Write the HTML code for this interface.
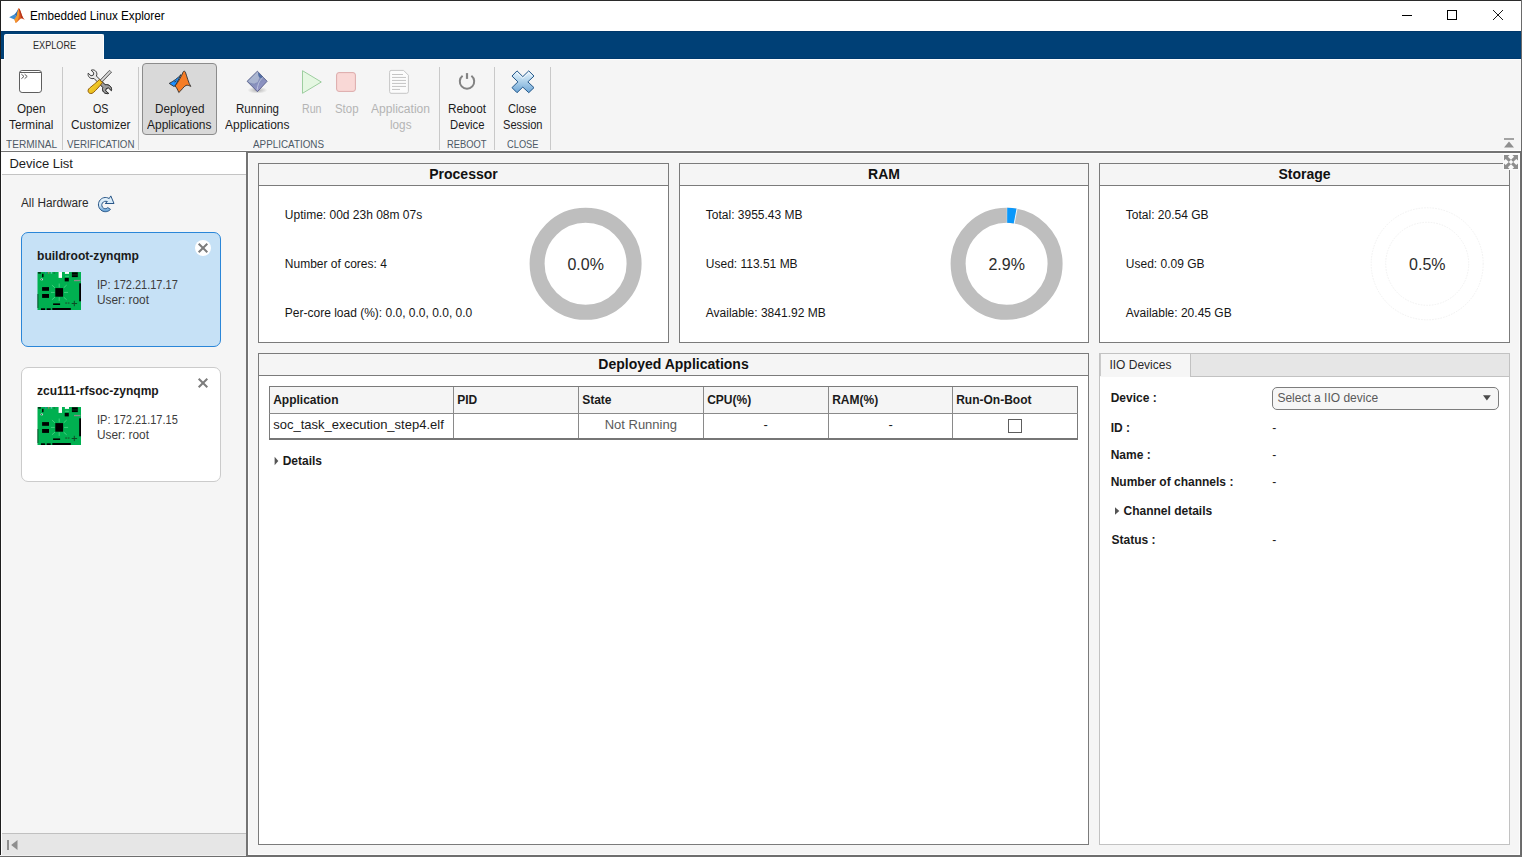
<!DOCTYPE html>
<html><head><meta charset="utf-8"><title>Embedded Linux Explorer</title>
<style>
html,body{margin:0;padding:0;}
body{width:1522px;height:857px;overflow:hidden;position:relative;background:#f5f5f5;font-family:"Liberation Sans", sans-serif;}
.b{position:absolute;box-sizing:border-box;}
.t{position:absolute;white-space:pre;line-height:1;transform-origin:0 0;font-family:"Liberation Sans", sans-serif;}
svg{overflow:visible;}
</style></head><body>
<div class="b" style="left:0px;top:0px;width:1522px;height:857px;background:#f5f5f5;"></div>
<div class="b" style="left:0px;top:0px;width:1522px;height:31px;background:#ffffff;"></div>
<div class="b" style="left:0px;top:31px;width:1522px;height:28px;background:#004076;"></div>
<div class="b" style="left:0px;top:31px;width:1522px;height:1px;background:#00376a;"></div>
<div class="b" style="left:0px;top:58px;width:1522px;height:1px;background:#003a6e;"></div>
<div class="b" style="left:0px;top:59px;width:1522px;height:1px;background:#fdfdfd;"></div>
<div class="b" style="left:4px;top:34px;width:100px;height:26px;background:#f5f5f5;border-radius:2px 2px 0 0;border:1px solid #fff;border-bottom:none;"></div>
<span class="t" style="left:30.40px;top:10.09px;font-size:12px;color:#000;transform:scaleX(0.9747);">Embedded Linux Explorer</span>
<span class="t" style="left:32.85px;top:39.52px;font-size:11.5px;color:#2a2a2a;transform:scaleX(0.7933);">EXPLORE</span>
<svg class="b" style="left:8px;top:6.7px" width="18" height="17" viewBox="0 0 18 17">
<path d="M1.2 10.2 L6.2 7.6 L8.6 9.4 L6.4 12.6 Z" fill="#3f8fd2"/>
<path d="M6.2 7.6 C8.2 6 9.3 3.6 10.4 1.6 L9.2 9.2 L8.6 9.4 Z" fill="#2f6fb0"/>
<path d="M10.4 1.6 C11.4 1 12.3 3.2 13 5.4 C14 8.6 15 11.4 16.6 12.6 C15.2 12.2 14.2 10.8 13 11.6 C11.2 12.8 9.6 15.2 7.8 16 L6.4 12.6 L8.6 9.4 Z" fill="#e2601f"/>
<path d="M10.4 1.6 C11 3 11.4 8 10.6 11 C9.8 13.2 8.8 15 7.8 16 L6.4 12.6 L8.6 9.4 Z" fill="#f29a2e"/>
<path d="M10.4 1.6 C11.4 1 12.3 3.2 13 5.4 C14 8.6 15 11.4 16.6 12.6 C15.2 12.2 14.2 10.8 13 11.6 C12.6 8 11.6 4 10.4 1.6 Z" fill="#b5321c"/>
</svg>
<svg class="b" style="left:1399px;top:8px" width="110" height="16" viewBox="0 0 110 16">
<path d="M3 7.5 H13" stroke="#000" stroke-width="1"/>
<rect x="48.5" y="2.5" width="9" height="9" fill="none" stroke="#000" stroke-width="1"/>
<path d="M94 2 L104 12 M104 2 L94 12" stroke="#000" stroke-width="0.9"/>
</svg>
<div class="b" style="left:62px;top:67px;width:1px;height:84px;background:#c9c9c9;"></div>
<div class="b" style="left:138px;top:67px;width:1px;height:84px;background:#c9c9c9;"></div>
<div class="b" style="left:439px;top:67px;width:1px;height:84px;background:#c9c9c9;"></div>
<div class="b" style="left:494px;top:67px;width:1px;height:84px;background:#c9c9c9;"></div>
<div class="b" style="left:550px;top:67px;width:1px;height:84px;background:#c9c9c9;"></div>
<div class="b" style="left:142px;top:63px;width:75px;height:72px;background:#d9d9d9;border:1px solid #8c8c8c;border-radius:4px;"></div>
<span class="t" style="left:16.95px;top:103.09px;font-size:12px;color:#1c1c1c;transform:scaleX(0.9707);">Open</span>
<span class="t" style="left:8.95px;top:119.09px;font-size:12px;color:#1c1c1c;transform:scaleX(0.9811);">Terminal</span>
<span class="t" style="left:92.65px;top:103.09px;font-size:12px;color:#1c1c1c;transform:scaleX(0.8937);">OS</span>
<span class="t" style="left:70.65px;top:119.09px;font-size:12px;color:#1c1c1c;transform:scaleX(0.9804);">Customizer</span>
<span class="t" style="left:154.95px;top:103.09px;font-size:12px;color:#1c1c1c;transform:scaleX(0.9763);">Deployed</span>
<span class="t" style="left:147.45px;top:119.09px;font-size:12px;color:#1c1c1c;transform:scaleX(0.9966);">Applications</span>
<span class="t" style="left:235.60px;top:103.09px;font-size:12px;color:#1c1c1c;transform:scaleX(0.9619);">Running</span>
<span class="t" style="left:224.85px;top:119.09px;font-size:12px;color:#1c1c1c;transform:scaleX(0.9966);">Applications</span>
<span class="t" style="left:302.05px;top:103.09px;font-size:12px;color:#b4b4b4;transform:scaleX(0.8857);">Run</span>
<span class="t" style="left:334.75px;top:103.09px;font-size:12px;color:#b4b4b4;transform:scaleX(0.9519);">Stop</span>
<span class="t" style="left:371.00px;top:103.09px;font-size:12px;color:#b4b4b4;transform:scaleX(1.0048);">Application</span>
<span class="t" style="left:389.75px;top:119.09px;font-size:12px;color:#b4b4b4;transform:scaleX(0.9766);">logs</span>
<span class="t" style="left:448.00px;top:103.09px;font-size:12px;color:#1c1c1c;transform:scaleX(0.9818);">Reboot</span>
<span class="t" style="left:449.75px;top:119.09px;font-size:12px;color:#1c1c1c;transform:scaleX(0.9404);">Device</span>
<span class="t" style="left:508.35px;top:103.09px;font-size:12px;color:#1c1c1c;transform:scaleX(0.9287);">Close</span>
<span class="t" style="left:502.85px;top:119.09px;font-size:12px;color:#1c1c1c;transform:scaleX(0.925);">Session</span>
<span class="t" style="left:5.80px;top:138.94px;font-size:11px;color:#4d5965;transform:scaleX(0.9169);">TERMINAL</span>
<span class="t" style="left:66.55px;top:138.94px;font-size:11px;color:#4d5965;transform:scaleX(0.8858);">VERIFICATION</span>
<span class="t" style="left:253.30px;top:138.94px;font-size:11px;color:#4d5965;transform:scaleX(0.8957);">APPLICATIONS</span>
<span class="t" style="left:446.95px;top:138.94px;font-size:11px;color:#4d5965;transform:scaleX(0.8503);">REBOOT</span>
<span class="t" style="left:506.85px;top:138.94px;font-size:11px;color:#4d5965;transform:scaleX(0.8446);">CLOSE</span>
<div class="b" style="left:0px;top:150px;width:1522px;height:1px;background:#fdfdfd;"></div>
<div class="b" style="left:0px;top:151px;width:1522px;height:1px;background:#747474;"></div>
<div class="b" style="left:246px;top:152px;width:1276px;height:1px;background:#747474;"></div>
<div class="b" style="left:1px;top:152px;width:245px;height:22px;background:#ffffff;"></div>
<div class="b" style="left:1px;top:174px;width:245px;height:1px;background:#c4c4c4;"></div>
<div class="b" style="left:246px;top:152px;width:2px;height:705px;background:#747474;"></div>
<div class="b" style="left:248px;top:153px;width:1272px;height:702px;border:1px solid #fcfcfc;"></div>
<span class="t" style="left:9.40px;top:157.25px;font-size:13px;color:#1c1c1c;">Device List</span>
<span class="t" style="left:21.20px;top:197.09px;font-size:12px;color:#2a2a2a;transform:scaleX(0.9825);">All Hardware</span>
<div class="b" style="left:1px;top:833px;width:245px;height:1px;background:#c0c0c0;"></div>
<div class="b" style="left:1px;top:834px;width:245px;height:21px;background:#e6e6e6;"></div>
<svg class="b" style="left:6px;top:839px" width="14" height="12" viewBox="0 0 14 12"><rect x="1" y="1" width="2" height="10" fill="#8e8e8e"/><path d="M11.5 1 L11.5 11 L5.2 6 Z" fill="#8e8e8e"/></svg>
<div class="b" style="left:0px;top:0px;width:1px;height:857px;background:#1e1e1e;"></div>
<div class="b" style="left:1px;top:152px;width:1px;height:703px;background:#fdfdfd;"></div>
<div class="b" style="left:0px;top:0px;width:1522px;height:1px;background:#2b2b2b;"></div>
<div class="b" style="left:1521px;top:0px;width:1px;height:857px;background:#6a6a6a;"></div>
<div class="b" style="left:1520px;top:151px;width:1px;height:706px;background:#6e6e6e;"></div>
<div class="b" style="left:0px;top:855px;width:246px;height:1px;background:#f0f0f0;"></div>
<div class="b" style="left:0px;top:856px;width:1522px;height:1px;background:#6e6e6e;"></div>
<div class="b" style="left:246px;top:855px;width:1276px;height:1px;background:#6e6e6e;"></div>
<svg class="b" style="left:18px;top:69px" width="26" height="26" viewBox="0 0 26 26">
<rect x="1.5" y="1.5" width="22" height="22" rx="2.6" ry="2.6" fill="#ffffff" stroke="#5e5e5e" stroke-width="1"/>
<path d="M1.8 3.5 H23.2" stroke="#5e5e5e" stroke-width="1"/>
<path d="M3.4 5.2 L6 7.45 L3.4 9.7 M6.6 5.2 L9.2 7.45 L6.6 9.7" fill="none" stroke="#5a5a5a" stroke-width="1"/>
</svg>
<svg class="b" style="left:83px;top:66px" width="34" height="32" viewBox="0 0 34 32">
<defs>
<linearGradient id="hnd" x1="0" y1="0" x2="1" y2="1"><stop offset="0" stop-color="#fbe23a"/><stop offset="1" stop-color="#e0a70c"/></linearGradient>
</defs>
<!-- wrench -->
<path d="M8.2 4.2 C10.6 3.2 13.2 4.6 13.8 7.2 C14 8.4 13.8 9.2 13.4 10 L22.2 18.8 C23.8 18.4 26 18.8 27.4 20.4 C28.6 21.8 28.8 23.4 28.4 24.6 L25.4 21.8 L23.2 22.6 L22.6 24.8 L25.6 27.4 C24 28 21.8 27.4 20.6 26 C19.4 24.6 19.2 22.8 19.8 21.4 L11 12.4 C9.8 12.8 8 12.8 6.6 11.6 C5.2 10.4 4.8 8.6 5.2 7.2 L8 9.8 L10.2 9.2 L10.8 7 Z" fill="#e9e9e9" stroke="#2b2b2b" stroke-width="0.9" stroke-linejoin="round"/>
<path d="M19.8 21.4 C19.2 22.8 19.4 24.6 20.6 26 C21.8 27.4 24 28 25.6 27.4 L22.6 24.8 L23.2 22.6 L25.4 21.8 L28.4 24.6 C28.8 23.4 28.6 21.8 27.4 20.4 C26 18.8 23.8 18.4 22.2 18.8 L18 14.6 L15.6 17 Z" fill="#9c9c9c" stroke="#2b2b2b" stroke-width="0.9" stroke-linejoin="round"/>
<!-- screwdriver shaft -->
<path d="M17.2 14 L26.4 4.4 L28.6 6.2 L19.2 16 Z" fill="#b9b9b9" stroke="#4a4a4a" stroke-width="0.8" stroke-linejoin="round"/>
<path d="M18.4 14.6 L27.2 5.4" stroke="#efefef" stroke-width="0.8"/>
<!-- handle -->
<path d="M16.4 13.6 L19.4 16.6 C16.6 20.4 13.2 24 10.4 26.6 C8.8 28 6.6 27.8 5.6 26.4 C4.6 25 5 23.2 6.6 22 C10 19.4 13.4 16.4 16.4 13.6 Z" fill="url(#hnd)" stroke="#8a5200" stroke-width="0.9" stroke-linejoin="round"/>
</svg>
<svg class="b" style="left:163px;top:66px" width="34" height="32" viewBox="0 0 34 32">
<path d="M6.2 17.4 C10 15.6 14.8 12.2 18 8.6 L12.4 19.8 L10.8 20.4 Z" fill="#1e90ff" stroke="#303030" stroke-width="0.9" stroke-linejoin="round"/>
<path d="M12.1 19.9 C15.6 15.6 18.8 9.6 20 6.2 C20.6 4.8 21.8 4.8 22.4 6.2 C24 10.6 25.6 17.4 27.8 20.4 C26 19.6 24.6 18.8 23 19.4 C20.4 20.6 18.6 24.4 15.8 26.5 C14.8 24 13.6 21.6 12.1 19.9 Z" fill="#f57d26" stroke="#303030" stroke-width="0.9" stroke-linejoin="round"/>
<path d="M11.4 16 L13.4 14.8" stroke="#303030" stroke-width="0.9"/>
</svg>
<svg class="b" style="left:240px;top:66px" width="34" height="32" viewBox="0 0 34 32">
<defs>
<linearGradient id="dia" x1="0" y1="0" x2="0.6" y2="1"><stop offset="0" stop-color="#a3afcb"/><stop offset="0.5" stop-color="#808cb6"/><stop offset="0.85" stop-color="#8f93c4"/><stop offset="1" stop-color="#a9a2d6"/></linearGradient>
<radialGradient id="shd" cx="0.5" cy="0.5" r="0.5"><stop offset="0" stop-color="#000" stop-opacity="0.28"/><stop offset="1" stop-color="#000" stop-opacity="0"/></radialGradient>
</defs>
<ellipse cx="17.4" cy="24.2" rx="10" ry="3.4" fill="url(#shd)"/>
<path d="M17.4 5.2 L27.1 15.3 L17.4 25.7 L7.1 15.3 Z" fill="url(#dia)" stroke="#47507e" stroke-width="0.8" stroke-linejoin="round"/>
<path d="M17.4 5.8 L18.6 7.2 C18.2 9 18.6 10.8 19.4 12 C18.6 13.4 18.4 14.6 18 15.6 C16 17.6 12.6 18 9.4 16.6 L8 15.3 Z" fill="#b3bed6" opacity="0.8"/>
<path d="M23 11.2 C21 13.2 19.6 15 18.6 17.4 C17.8 19.4 17.4 21.4 17.2 23.8" fill="none" stroke="#c3cce2" stroke-width="1" opacity="0.8"/>
<path d="M18.2 6.6 L22.6 11 C21.4 12.4 19.8 12 19 10.8 C18.2 9.6 18 8 18.2 6.6 Z" fill="#46669f" opacity="0.85"/>
</svg>
<svg class="b" style="left:296px;top:66px" width="34" height="32" viewBox="0 0 34 32"><path d="M6.5 4.7 L6.5 27.3 L25.3 16 Z" fill="#e5f7e2" stroke="#9dce9f" stroke-width="1" stroke-linejoin="round"/></svg>
<svg class="b" style="left:330px;top:66px" width="34" height="32" viewBox="0 0 34 32"><rect x="6.6" y="6.6" width="18.8" height="18.8" rx="2.4" fill="#f9d8d6" stroke="#dcaaaa" stroke-width="1"/></svg>
<svg class="b" style="left:382px;top:66px" width="34" height="32" viewBox="0 0 34 32">
<path d="M9 4.4 H21.6 L26.4 9.2 V25.4 Q26.4 27.3 24.5 27.3 H9 Q7.6 27.3 7.6 25.4 V6.3 Q7.6 4.4 9 4.4 Z" fill="#fcfcfc" stroke="#c6c6c6" stroke-width="1" stroke-linejoin="round"/>
<path d="M10 8.5 H21 M10 11.45 H24 M10 14.45 H24 M10 17.45 H24 M10 20.45 H24 M10 23.45 H18" stroke="#bdbdbd" stroke-width="0.9"/>
</svg>
<svg class="b" style="left:450px;top:66px" width="34" height="32" viewBox="0 0 34 32">
<path d="M12.6 9.8 A7.2 7.2 0 1 0 21.4 9.8" fill="none" stroke="#838383" stroke-width="2"/>
<path d="M17 7.1 V12.9" stroke="#838383" stroke-width="2.2"/>
</svg>
<svg class="b" style="left:506px;top:66px" width="34" height="32" viewBox="0 0 34 32">
<defs><linearGradient id="cx" x1="0" y1="0" x2="0" y2="1"><stop offset="0" stop-color="#e9f5fd"/><stop offset="0.45" stop-color="#b3d4ec"/><stop offset="1" stop-color="#6ea6d6"/></linearGradient></defs>
<path d="M11 4.85 L16.8 10.63 L22.76 4.85 L28 10.07 L21.83 15.86 L28 21.64 L22.76 26.68 L16.8 21.1 L11 26.68 L5.97 21.64 L11.94 15.86 L5.97 10.07 Z" fill="url(#cx)" stroke="#24588a" stroke-width="1" stroke-linejoin="round"/>
<path d="M11 6.6 L16.8 12.3 L22.76 6.6 L26.2 10.07" fill="none" stroke="#fff" stroke-width="0.9" opacity="0.8"/>
</svg>
<svg class="b" style="left:92px;top:192px" width="30" height="24" viewBox="0 0 30 24">
<defs><linearGradient id="rf" x1="0" y1="0" x2="0" y2="1"><stop offset="0" stop-color="#eaf5fc"/><stop offset="0.6" stop-color="#cfe5f5"/><stop offset="1" stop-color="#5b9bd3"/></linearGradient></defs>
<path d="M17.2 6.6 L18.8 3.9 L22 11.5 H13.2 L15.4 9.6 C13.6 8.8 11.4 9.4 10.4 11 C9.2 12.8 9.8 15.2 11.6 16.2 C13 17 14.6 16.8 15.8 15.6 L18.5 17.4 C16.4 19.8 12.8 20.4 10 18.8 C6.6 16.8 5.4 12.4 7.4 9 C9.4 5.6 13.8 4.4 17.2 6.6 Z" fill="url(#rf)" stroke="#2a5788" stroke-width="1" stroke-linejoin="round"/>
</svg>
<div class="b" style="left:21px;top:232px;width:200px;height:115px;background:#c6e1f6;border:1px solid #2a86d8;border-radius:7px;"></div>
<div class="b" style="left:195px;top:240px;width:16px;height:16px;background:#ffffff;border-radius:8px;"></div>
<svg class="b" style="left:197px;top:242px" width="12" height="12" viewBox="0 0 12 12"><path d="M1.7 1.7 L10.3 10.3 M10.3 1.7 L1.7 10.3" stroke="#7c7c7c" stroke-width="2"/></svg>
<span class="t" style="left:37.40px;top:250.09px;font-size:12px;color:#1a1a1a;font-weight:700;transform:scaleX(1.0066);">buildroot-zynqmp</span>
<svg class="b" style="left:37px;top:272px" width="45" height="38" viewBox="0 0 45 38"><g transform="translate(0.5,0)">
<rect x="0" y="0" width="43.5" height="38" fill="#00b050"/>
<g stroke="#4fd68a" stroke-width="0.9" opacity="0.9">
<path d="M21.7 11.5 V15.4 M21.7 25.2 V28.9 M13.4 20.4 H17.2 M26.6 20.4 H30.6 M14.4 13 L17.4 15.8 M29.2 13 L26.2 15.8 M14.4 27.8 L17.4 25.2 M29.2 27.8 L26.2 25.2"/>
</g>
<g fill="#000">
<rect x="17.8" y="16.1" width="7.8" height="8.6"/>
<rect x="4.6" y="15.1" width="6.9" height="3.7"/>
<rect x="4.6" y="22" width="6.9" height="3.9"/>
<rect x="27.2" y="5.9" width="4.1" height="3.5"/>
<rect x="34.4" y="0.3" width="5.9" height="4.8"/>
<rect x="41.7" y="11.3" width="1.8" height="18"/>
<rect x="15.6" y="31.4" width="7" height="1.6"/>
<rect x="14.8" y="36" width="18.5" height="2"/>
<rect x="3.5" y="36.3" width="4.1" height="1.7"/>
<rect x="9.2" y="36.3" width="4" height="1.7"/>
<rect x="0.6" y="0.3" width="2.8" height="1.2"/>
<rect x="4.6" y="1.8" width="1.4" height="3.4"/>
<rect x="0" y="22" width="0.8" height="14" opacity="0.7"/>
</g>
<rect x="34.6" y="2.6" width="5.5" height="0.7" fill="#00b050" opacity="0.5"/>
<rect x="21.1" y="0" width="3.4" height="5.9" fill="#fff"/>
<rect x="27.4" y="0" width="4.1" height="1.9" fill="#fff"/>
<rect x="27.6" y="3.8" width="3.8" height="0.8" fill="#4fd68a"/>
<rect x="36.5" y="7.9" width="6.5" height="1.3" fill="#8c8c8c"/>
<ellipse cx="4.3" cy="7.4" rx="1.3" ry="0.9" fill="#fff"/><rect x="3.8" y="7" width="0.9" height="0.9" fill="#000"/>
<rect x="7.5" y="0.4" width="1.5" height="1" fill="#2c7fd0"/><rect x="10.4" y="0.4" width="1.5" height="1" fill="#e87060"/><rect x="13.2" y="0.4" width="1.5" height="1" fill="#9fe0f0"/><rect x="16" y="0.6" width="1.6" height="0.9" fill="#106030"/>
<path d="M36.8 28.8 V34.2 M34.2 31.5 H39.6" stroke="#0e4a26" stroke-width="1"/>
<rect x="27.7" y="30.4" width="1.8" height="1.3" fill="#1a5c34"/><rect x="30.2" y="30.4" width="1.8" height="1.3" fill="#1a5c34"/>
</g></svg>
<span class="t" style="left:97.40px;top:279.09px;font-size:12px;color:#3c3c3c;transform:scaleX(0.9174);">IP: 172.21.17.17</span>
<span class="t" style="left:97.40px;top:294.09px;font-size:12px;color:#3c3c3c;transform:scaleX(0.987);">User: root</span>
<div class="b" style="left:21px;top:367px;width:200px;height:115px;background:#ffffff;border:1px solid #cbcbcb;border-radius:7px;"></div>
<svg class="b" style="left:197px;top:377px" width="12" height="12" viewBox="0 0 12 12"><path d="M1.7 1.7 L10.3 10.3 M10.3 1.7 L1.7 10.3" stroke="#7c7c7c" stroke-width="2"/></svg>
<span class="t" style="left:37.40px;top:385.09px;font-size:12px;color:#1a1a1a;font-weight:700;transform:scaleX(1.0027);">zcu111-rfsoc-zynqmp</span>
<svg class="b" style="left:37px;top:407px" width="45" height="38" viewBox="0 0 45 38"><g transform="translate(0.5,0)">
<rect x="0" y="0" width="43.5" height="38" fill="#00b050"/>
<g stroke="#4fd68a" stroke-width="0.9" opacity="0.9">
<path d="M21.7 11.5 V15.4 M21.7 25.2 V28.9 M13.4 20.4 H17.2 M26.6 20.4 H30.6 M14.4 13 L17.4 15.8 M29.2 13 L26.2 15.8 M14.4 27.8 L17.4 25.2 M29.2 27.8 L26.2 25.2"/>
</g>
<g fill="#000">
<rect x="17.8" y="16.1" width="7.8" height="8.6"/>
<rect x="4.6" y="15.1" width="6.9" height="3.7"/>
<rect x="4.6" y="22" width="6.9" height="3.9"/>
<rect x="27.2" y="5.9" width="4.1" height="3.5"/>
<rect x="34.4" y="0.3" width="5.9" height="4.8"/>
<rect x="41.7" y="11.3" width="1.8" height="18"/>
<rect x="15.6" y="31.4" width="7" height="1.6"/>
<rect x="14.8" y="36" width="18.5" height="2"/>
<rect x="3.5" y="36.3" width="4.1" height="1.7"/>
<rect x="9.2" y="36.3" width="4" height="1.7"/>
<rect x="0.6" y="0.3" width="2.8" height="1.2"/>
<rect x="4.6" y="1.8" width="1.4" height="3.4"/>
<rect x="0" y="22" width="0.8" height="14" opacity="0.7"/>
</g>
<rect x="34.6" y="2.6" width="5.5" height="0.7" fill="#00b050" opacity="0.5"/>
<rect x="21.1" y="0" width="3.4" height="5.9" fill="#fff"/>
<rect x="27.4" y="0" width="4.1" height="1.9" fill="#fff"/>
<rect x="27.6" y="3.8" width="3.8" height="0.8" fill="#4fd68a"/>
<rect x="36.5" y="7.9" width="6.5" height="1.3" fill="#8c8c8c"/>
<ellipse cx="4.3" cy="7.4" rx="1.3" ry="0.9" fill="#fff"/><rect x="3.8" y="7" width="0.9" height="0.9" fill="#000"/>
<rect x="7.5" y="0.4" width="1.5" height="1" fill="#2c7fd0"/><rect x="10.4" y="0.4" width="1.5" height="1" fill="#e87060"/><rect x="13.2" y="0.4" width="1.5" height="1" fill="#9fe0f0"/><rect x="16" y="0.6" width="1.6" height="0.9" fill="#106030"/>
<path d="M36.8 28.8 V34.2 M34.2 31.5 H39.6" stroke="#0e4a26" stroke-width="1"/>
<rect x="27.7" y="30.4" width="1.8" height="1.3" fill="#1a5c34"/><rect x="30.2" y="30.4" width="1.8" height="1.3" fill="#1a5c34"/>
</g></svg>
<span class="t" style="left:97.40px;top:414.09px;font-size:12px;color:#3c3c3c;transform:scaleX(0.9174);">IP: 172.21.17.15</span>
<span class="t" style="left:97.40px;top:429.09px;font-size:12px;color:#3c3c3c;transform:scaleX(0.987);">User: root</span>
<div class="b" style="left:258px;top:163px;width:411px;height:180px;background:#ffffff;border:1px solid #7b7b7b;"></div>
<div class="b" style="left:259px;top:164px;width:409px;height:21px;background:#f5f5f5;"></div>
<div class="b" style="left:258px;top:185px;width:411px;height:1px;background:#7b7b7b;"></div>
<span class="t" style="left:429.26px;top:167.40px;font-size:14px;color:#111;font-weight:700;">Processor</span>
<span class="t" style="left:284.80px;top:209.09px;font-size:12px;color:#161616;">Uptime: 00d 23h 08m 07s</span>
<span class="t" style="left:284.80px;top:258.09px;font-size:12px;color:#161616;">Number of cores: 4</span>
<span class="t" style="left:284.80px;top:307.09px;font-size:12px;color:#161616;">Per-core load (%): 0.0, 0.0, 0.0, 0.0</span>
<svg class="b" style="left:0;top:0" width="1522" height="857"><circle cx="585.6" cy="263.8" r="48.5" fill="none" stroke="#bebebe" stroke-width="15"/></svg>
<span class="t" style="left:567.47px;top:256.71px;font-size:16px;color:#2b2b2b;">0.0%</span>
<div class="b" style="left:679px;top:163px;width:410px;height:180px;background:#ffffff;border:1px solid #7b7b7b;"></div>
<div class="b" style="left:680px;top:164px;width:408px;height:21px;background:#f5f5f5;"></div>
<div class="b" style="left:679px;top:185px;width:410px;height:1px;background:#7b7b7b;"></div>
<span class="t" style="left:868.05px;top:167.40px;font-size:14px;color:#111;font-weight:700;">RAM</span>
<span class="t" style="left:705.80px;top:209.09px;font-size:12px;color:#161616;">Total: 3955.43 MB</span>
<span class="t" style="left:705.80px;top:258.09px;font-size:12px;color:#161616;">Used: 113.51 MB</span>
<span class="t" style="left:705.80px;top:307.09px;font-size:12px;color:#161616;">Available: 3841.92 MB</span>
<svg class="b" style="left:0;top:0" width="1522" height="857"><circle cx="1006.6" cy="263.8" r="48.5" fill="none" stroke="#bebebe" stroke-width="15"/><path d="M1006.99 207.80 A56 56 0 0 1 1017.00 208.77 L1014.21 223.51 A41 41 0 0 0 1006.89 222.80 Z" fill="#0a98fb"/><path d="M1017.11 208.18 L1014.10 224.10" stroke="#ffffff" stroke-width="0.9"/><path d="M1007.00 207.20 L1006.88 223.40" stroke="#ffffff" stroke-width="0.5" opacity="0.7"/></svg>
<span class="t" style="left:988.47px;top:256.71px;font-size:16px;color:#2b2b2b;">2.9%</span>
<div class="b" style="left:1099px;top:163px;width:411px;height:180px;background:#ffffff;border:1px solid #7b7b7b;"></div>
<div class="b" style="left:1100px;top:164px;width:409px;height:21px;background:#f5f5f5;"></div>
<div class="b" style="left:1099px;top:185px;width:411px;height:1px;background:#7b7b7b;"></div>
<span class="t" style="left:1278.44px;top:167.40px;font-size:14px;color:#111;font-weight:700;">Storage</span>
<span class="t" style="left:1125.80px;top:209.09px;font-size:12px;color:#161616;">Total: 20.54 GB</span>
<span class="t" style="left:1125.80px;top:258.09px;font-size:12px;color:#161616;">Used: 0.09 GB</span>
<span class="t" style="left:1125.80px;top:307.09px;font-size:12px;color:#161616;">Available: 20.45 GB</span>
<svg class="b" style="left:0;top:0" width="1522" height="857"><circle cx="1427.2" cy="263.8" r="56" fill="none" stroke="#ededed" stroke-width="0.8" stroke-dasharray="1.6 1.2"/><circle cx="1427.2" cy="263.8" r="41.5" fill="none" stroke="#ededed" stroke-width="0.8" stroke-dasharray="1.6 1.2"/></svg>
<span class="t" style="left:1409.07px;top:256.71px;font-size:16px;color:#2b2b2b;">0.5%</span>
<div class="b" style="left:258px;top:353px;width:831px;height:492px;background:#ffffff;border:1px solid #7b7b7b;"></div>
<div class="b" style="left:259px;top:354px;width:829px;height:21px;background:#f5f5f5;"></div>
<div class="b" style="left:258px;top:375px;width:831px;height:1px;background:#7b7b7b;"></div>
<span class="t" style="left:598.30px;top:357.40px;font-size:14px;color:#111;font-weight:700;">Deployed Applications</span>
<div class="b" style="left:269px;top:386px;width:809px;height:53px;background:#ffffff;border:1px solid #7b7b7b;"></div>
<div class="b" style="left:270px;top:387px;width:807px;height:26px;background:#f5f5f5;"></div>
<div class="b" style="left:269px;top:413px;width:809px;height:1px;background:#8a8a8a;"></div>
<div class="b" style="left:269px;top:438px;width:809px;height:2px;background:#767676;"></div>
<div class="b" style="left:453px;top:387px;width:1px;height:51px;background:#8a8a8a;"></div>
<div class="b" style="left:578px;top:387px;width:1px;height:51px;background:#8a8a8a;"></div>
<div class="b" style="left:703px;top:387px;width:1px;height:51px;background:#8a8a8a;"></div>
<div class="b" style="left:828px;top:387px;width:1px;height:51px;background:#8a8a8a;"></div>
<div class="b" style="left:952px;top:387px;width:1px;height:51px;background:#8a8a8a;"></div>
<span class="t" style="left:273.20px;top:394.09px;font-size:12px;color:#1a1a1a;font-weight:700;">Application</span>
<span class="t" style="left:457.20px;top:394.09px;font-size:12px;color:#1a1a1a;font-weight:700;">PID</span>
<span class="t" style="left:582.20px;top:394.09px;font-size:12px;color:#1a1a1a;font-weight:700;">State</span>
<span class="t" style="left:707.20px;top:394.09px;font-size:12px;color:#1a1a1a;font-weight:700;">CPU(%)</span>
<span class="t" style="left:832.20px;top:394.09px;font-size:12px;color:#1a1a1a;font-weight:700;">RAM(%)</span>
<span class="t" style="left:956.20px;top:394.09px;font-size:12px;color:#1a1a1a;font-weight:700;">Run-On-Boot</span>
<span class="t" style="left:273.20px;top:418.25px;font-size:13px;color:#1a1a1a;">soc_task_execution_step4.elf</span>
<span class="t" style="left:604.66px;top:418.25px;font-size:13px;color:#5a5a5a;">Not Running</span>
<span class="t" style="left:763.43px;top:418.25px;font-size:13px;color:#1a1a1a;">-</span>
<span class="t" style="left:888.43px;top:418.25px;font-size:13px;color:#1a1a1a;">-</span>
<div class="b" style="left:1008px;top:419px;width:14px;height:14px;background:#ffffff;border:1px solid #5e5e5e;"></div>
<svg class="b" style="left:273px;top:455px" width="8" height="12" viewBox="0 0 8 12"><path d="M1.6 1.8 L5.3 6 L1.6 10.2 Z" fill="#555"/></svg>
<span class="t" style="left:282.70px;top:455.09px;font-size:12px;color:#1a1a1a;font-weight:700;">Details</span>
<div class="b" style="left:1099px;top:353px;width:411px;height:492px;background:#ffffff;border:1px solid #c2c2c2;"></div>
<div class="b" style="left:1100px;top:354px;width:409px;height:22px;background:#e6e6e6;"></div>
<div class="b" style="left:1100px;top:376px;width:409px;height:1px;background:#c2c2c2;"></div>
<div class="b" style="left:1100px;top:354px;width:90px;height:23px;background:#f6f6f6;"></div>
<div class="b" style="left:1190px;top:354px;width:1px;height:23px;background:#c2c2c2;"></div>
<div class="b" style="left:1100px;top:354px;width:1px;height:22px;background:#cacaca;"></div>
<span class="t" style="left:1109.40px;top:359.09px;font-size:12px;color:#2a2a2a;">IIO Devices</span>
<span class="t" style="left:1110.70px;top:392.09px;font-size:12px;color:#1a1a1a;font-weight:700;">Device :</span>
<span class="t" style="left:1110.70px;top:422.09px;font-size:12px;color:#1a1a1a;font-weight:700;">ID :</span>
<span class="t" style="left:1110.70px;top:449.09px;font-size:12px;color:#1a1a1a;font-weight:700;">Name :</span>
<span class="t" style="left:1110.70px;top:476.09px;font-size:12px;color:#1a1a1a;font-weight:700;">Number of channels :</span>
<span class="t" style="left:1111.60px;top:534.09px;font-size:12px;color:#1a1a1a;font-weight:700;">Status :</span>
<span class="t" style="left:1272.20px;top:422.09px;font-size:12px;color:#1a1a1a;">-</span>
<span class="t" style="left:1272.20px;top:449.09px;font-size:12px;color:#1a1a1a;">-</span>
<span class="t" style="left:1272.20px;top:476.09px;font-size:12px;color:#1a1a1a;">-</span>
<span class="t" style="left:1272.20px;top:534.09px;font-size:12px;color:#1a1a1a;">-</span>
<svg class="b" style="left:1114px;top:505px" width="8" height="12" viewBox="0 0 8 12"><path d="M1.0 2.2 L5.3 6 L1.0 9.8 Z" fill="#555"/></svg>
<span class="t" style="left:1123.50px;top:505.09px;font-size:12px;color:#1a1a1a;font-weight:700;">Channel details</span>
<div class="b" style="left:1272px;top:387px;width:227px;height:23px;background:#f6f6f6;border:1px solid #7d7d7d;border-radius:5px;"></div>
<span class="t" style="left:1277.40px;top:392.09px;font-size:12px;color:#5a5a5a;">Select a IIO device</span>
<svg class="b" style="left:1482px;top:394px" width="10" height="8" viewBox="0 0 10 8"><path d="M1 1.2 H8.8 L4.9 6.6 Z" fill="#4a4a4a"/></svg>
<svg class="b" style="left:1503px;top:137px" width="14" height="14" viewBox="0 0 14 14"><rect x="1" y="1.2" width="10" height="1.6" fill="#8f8f8f"/><path d="M6 4.6 L11 10.6 H1 Z" fill="#8f8f8f"/></svg>
<div class="b" style="left:1503px;top:154px;width:16px;height:16px;background:#fafafa;"></div>
<svg class="b" style="left:1504px;top:155px" width="14" height="14" viewBox="0 0 14 14"><g fill="#8e8e8e" stroke="none">
<path d="M0 0 H5.6 L3.9 1.7 L7 4.8 L4.8 7 L1.7 3.9 L0 5.6 Z"/>
<path d="M14 0 V5.6 L12.3 3.9 L9.2 7 L7 4.8 L10.1 1.7 L8.4 0 Z"/>
<path d="M0 14 V8.4 L1.7 10.1 L4.8 7 L7 9.2 L3.9 12.3 L5.6 14 Z"/>
<path d="M14 14 H8.4 L10.1 12.3 L7 9.2 L9.2 7 L12.3 10.1 L14 8.4 Z"/>
</g><circle cx="7" cy="7" r="1.1" fill="#fafafa"/></svg>
</body></html>
